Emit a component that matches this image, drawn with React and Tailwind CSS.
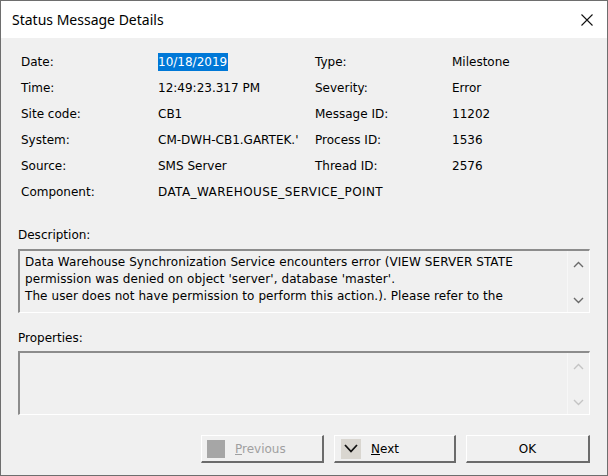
import React from "react";

const rows = [
  ["Date:", "10/18/2019", "Type:", "Milestone"],
  ["Time:", "12:49:23.317 PM", "Severity:", "Error"],
  ["Site code:", "CB1", "Message ID:", "11202"],
  ["System:", "CM-DWH-CB1.GARTEK.'", "Process ID:", "1536"],
  ["Source:", "SMS Server", "Thread ID:", "2576"],
];

function Chevron({ up, color }) {
  return (
    <svg width="11" height="7" viewBox="0 0 11 7">
      <path
        d={up ? "M1 6 L5.5 1.5 L10 6" : "M1 1 L5.5 5.5 L10 1"}
        fill="none"
        stroke={color}
        strokeWidth="1.4"
      />
    </svg>
  );
}

function TextBox({ children, disabled }) {
  const c = disabled ? "#c4c4c4" : "#6a6a6a";
  return (
    <div className="flex h-[64px] border-t-2 border-l-2 border-t-[#8c8c8c] border-l-[#8c8c8c] border-b border-r border-b-white border-r-white bg-[#f0f0f0]">
      <div className="flex-1 overflow-hidden pl-[5px] pt-[3px] text-[12px] leading-[17px] tracking-[0.08px] whitespace-nowrap text-black">
        {children}
      </div>
      <div className="flex w-[22px] flex-col items-center justify-between border-l border-[#f7f7f7] bg-[#f0f0f0] pt-[10px] pb-[8px]">
        <Chevron up color={c} />
        <Chevron color={c} />
      </div>
    </div>
  );
}

function Button({ children, className = "" }) {
  return (
    <button
      className={
        "flex h-[28px] items-center border-t border-l border-t-white border-l-white border-b-2 border-r-2 border-b-[#6b6b6b] border-r-[#6b6b6b] bg-[#f0f0f0] text-[12px] " +
        className
      }
    >
      {children}
    </button>
  );
}

export default function App() {
  return (
    <div
      className="flex h-[476px] w-[608px] flex-col border border-[#6e6e6e] bg-[#f0f0f0]"
      style={{ fontFamily: '"DejaVu Sans", Tahoma, sans-serif' }}
    >
      {/* Title bar */}
      <div className="flex h-[37px] items-center justify-between bg-white pl-[11px] pr-[14px]">
        <span className="text-[14px] text-black" style={{ fontFamily: '"Noto Sans", sans-serif' }}>
          Status Message Details
        </span>
        <svg width="12" height="12" viewBox="0 0 12 12">
          <path d="M0.5 0.5 L11.5 11.5 M11.5 0.5 L0.5 11.5" stroke="#111" strokeWidth="1.1" />
        </svg>
      </div>

      {/* Body */}
      <div className="flex flex-1 flex-col px-[17px] pt-[11px]">
        <div className="grid grid-cols-[137px_157px_137px_1fr] pl-[3px] text-[12px] text-black">
          {rows.map((r, i) => (
            <React.Fragment key={i}>
              <div className="flex h-[26px] items-center">{r[0]}</div>
              <div className="flex h-[26px] items-center overflow-hidden whitespace-nowrap pr-[6px]">
                {i === 0 ? (
                  <span className="-ml-[1px] bg-[#0078d7] px-[1px] leading-[18px] text-white">{r[1]}</span>
                ) : (
                  r[1]
                )}
              </div>
              <div className="flex h-[26px] items-center">{r[2]}</div>
              <div className="flex h-[26px] items-center">{r[3]}</div>
            </React.Fragment>
          ))}
          <div className="flex h-[26px] items-center">Component:</div>
          <div className="col-span-3 flex h-[26px] items-center whitespace-nowrap tracking-[0.4px]">
            DATA_WAREHOUSE_SERVICE_POINT
          </div>
        </div>

        <div className="mt-[22px] mb-[6px] text-[12px] leading-[16px]">Description:</div>
        <TextBox>
          Data Warehouse Synchronization Service encounters error (VIEW SERVER STATE
          <br />
          permission was denied on object 'server', database 'master'.
          <br />
          The user does not have permission to perform this action.). Please refer to the
        </TextBox>

        <div className="mt-[17px] mb-[5px] text-[12px] leading-[16px]">Properties:</div>
        <TextBox disabled />

        <div className="mt-[20px] flex justify-end gap-[10px]">
          <Button className="w-[123px] pl-[5px]">
            <span className="h-[18px] w-[18px] bg-[#a6a6a6]" />
            <span className="ml-[10px] text-[#a0a0a0]">
              <span className="underline">P</span>revious
            </span>
          </Button>
          <Button className="w-[122px] pl-[6px]">
            <span className="flex h-[20px] w-[20px] items-center justify-center bg-[#d9d6d0]">
              <svg width="14" height="9" viewBox="0 0 14 9">
                <path d="M1 1 L7 7.5 L13 1" fill="none" stroke="#111" strokeWidth="1.8" />
              </svg>
            </span>
            <span className="ml-[10px] text-black">
              <span className="underline">N</span>ext
            </span>
          </Button>
          <Button className="w-[124px] justify-center text-black">OK</Button>
        </div>
      </div>
    </div>
  );
}
